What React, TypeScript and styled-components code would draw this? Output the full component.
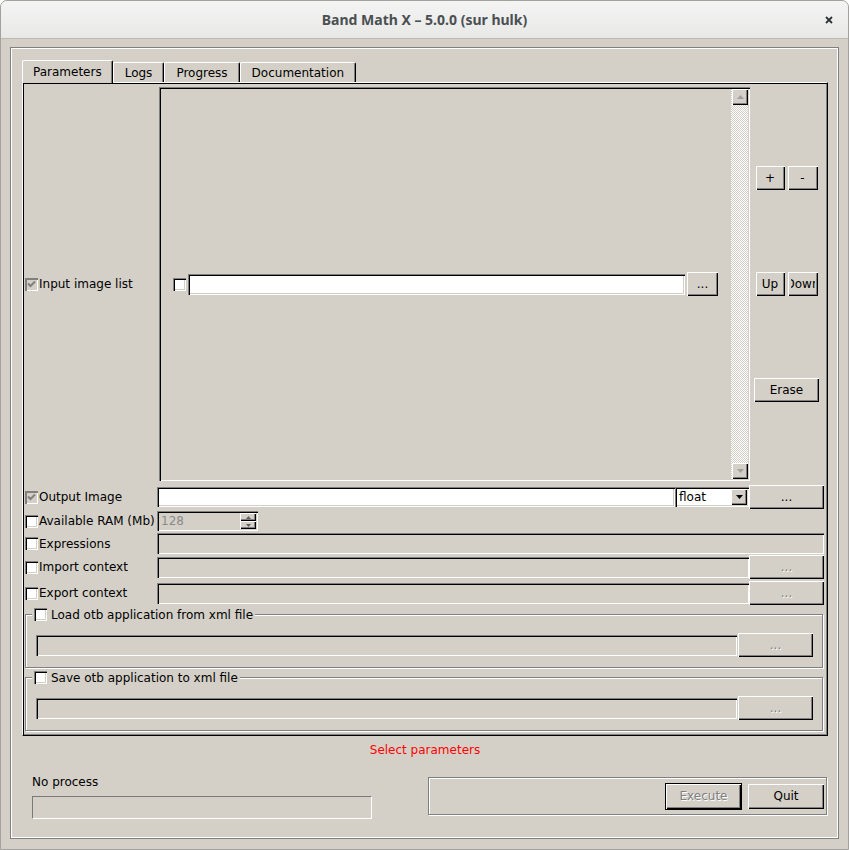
import React from "react";
import styled, { createGlobalStyle, css } from "styled-components";

const BG = "#d4d0c8";

const GlobalStyle = createGlobalStyle`
  html, body {
    margin: 0;
    padding: 0;
    background: #ffffff;
  }
  body {
    font-family: "DejaVu Sans", "Liberation Sans", sans-serif;
    font-size: 12px;
    color: #000;
  }
  * {
    box-sizing: border-box;
  }
`;

// windows style bevels
const raised = css`
  box-shadow: inset 1px 1px #ffffff, inset -1px -1px #000000, inset -2px -2px #808080;
`;

const sunken = css`
  box-shadow: inset 1px 1px #808080, inset 2px 2px #000000, inset -1px -1px #ffffff,
    inset -2px -2px ${BG};
`;

const etched = css`
  border: 1px solid #808080;
  box-shadow: inset 1px 1px #ffffff, 1px 1px #ffffff;
`;

const Window = styled.div`
  width: 849px;
  height: 850px;
  display: flex;
  flex-direction: column;
  background: ${BG};
  border: 1px solid #a3a19d;
  border-radius: 7px 7px 0 0;
  overflow: hidden;
`;

const TitleBar = styled.div`
  height: 38px;
  flex: none;
  display: grid;
  grid-template-columns: 1fr auto 1fr;
  align-items: center;
  background: linear-gradient(#f4f4f4, #e8e8e7);
  border-bottom: 1px solid #bfb8b1;
`;

const Title = styled.div`
  grid-column: 2;
  font-family: "Noto Sans", "Open Sans", sans-serif;
  font-weight: 700;
  font-size: 14px;
  color: #4a4f51;
`;

const CloseBox = styled.div`
  justify-self: end;
  display: flex;
  padding-right: 15px;
`;

const Body = styled.div`
  flex: 1;
  display: flex;
  padding: 8px 9px 10px 9px;
`;

const MainFrame = styled.div`
  flex: 1;
  display: flex;
  flex-direction: column;
  padding: 12px 10px 0 11px;
  ${etched}
  box-shadow: inset 1px 1px #ffffff, inset -1px -1px #ffffff;
`;

const TabBar = styled.div`
  height: 22px;
  display: flex;
  align-items: flex-end;
  position: relative;
  z-index: 1;
`;

const Tab = styled.div<{ $active?: boolean }>`
  height: ${(p) => (p.$active ? 23 : 20)}px;
  margin-bottom: ${(p) => (p.$active ? -1 : 0)}px;
  padding: 0 ${(p) => (p.$active ? 10 : 11)}px;
  display: flex;
  align-items: center;
  padding-bottom: ${(p) => (p.$active ? 1 : 0)}px;
  background: ${BG};
  border-left: 1px solid #ffffff;
  border-top: 1px solid #ffffff;
  border-right: 1px solid #000000;
  border-radius: 2px 2px 0 0;
  box-shadow: inset -1px 0 #808080;
  white-space: nowrap;
`;

const Pane = styled.div`
  height: 654px;
  display: flex;
  flex-direction: column;
  padding: 4px 3px 4px 2px;
  border: 1px solid;
  border-color: #ffffff #000000 #000000 #ffffff;
  box-shadow: inset 1px 1px #000000, inset -1px -1px #808080;
`;

const columns = css`
  display: grid;
  grid-template-columns: 132px 592px 75px;
`;

const ListRow = styled.div`
  ${columns}
  height: 394px;
  margin-bottom: 4px;
`;

const FieldGrid = styled.div`
  ${columns}
  grid-template-rows: 24px 24px 21px 26px 26px;
`;

const FieldLabel = styled.div`
  display: flex;
  align-items: center;
  gap: 1px;
  white-space: nowrap;
`;

const FieldCell = styled.div<{ $span?: boolean }>`
  display: flex;
  align-items: center;
  grid-column: ${(p) => (p.$span ? "span 2" : "auto")};
`;

const CheckBox = styled.span<{ $grey?: boolean }>`
  width: 13px;
  height: 13px;
  flex: none;
  display: flex;
  align-items: center;
  justify-content: center;
  background: ${(p) => (p.$grey ? BG : "#ffffff")};
  box-shadow: inset 1px 1px #808080, inset 2px 2px ${(p) => (p.$grey ? "#808080" : "#000000")},
    inset -1px -1px #ffffff, inset -2px -2px ${BG};
`;

const ListBox = styled.div`
  margin: 0 -1px 0 2px;
  padding: 2px;
  display: flex;
  background: ${BG};
  ${sunken}
`;

const ListViewport = styled.div`
  flex: 1;
  display: flex;
  align-items: center;
  gap: 2px;
  padding: 0 13px 0 12px;
`;

const ScrollBar = styled.div`
  width: 17px;
  display: flex;
  flex-direction: column;
  padding: 0 0 0 1px;
  background: repeating-conic-gradient(#ffffff 0 25%, ${BG} 0 50%) 0 0 / 2px 2px;
`;

const ScrollArrow = styled.div`
  height: 16px;
  display: flex;
  align-items: center;
  justify-content: center;
  background: ${BG};
  ${raised}
`;

const ScrollTrack = styled.div`
  flex: 1;
`;

const SideColumn = styled.div`
  display: flex;
  flex-direction: column;
  align-items: center;
  justify-content: space-between;
  padding: 79px 0;
`;

const ButtonPair = styled.div`
  display: flex;
  gap: 3px;
`;

const LineEdit = styled.div<{ $disabled?: boolean; $h?: number }>`
  flex: 1;
  height: ${(p) => p.$h ?? 21}px;
  background: ${(p) => (p.$disabled ? BG : "#ffffff")};
  ${sunken}
`;

const PushButton = styled.button<{ $w?: number; $h?: number; $default?: boolean }>`
  width: ${(p) => (p.$w ? `${p.$w}px` : "100%")};
  height: ${(p) => p.$h ?? 24}px;
  flex: none;
  padding: 0 3px;
  border: ${(p) => (p.$default ? "1px solid #000000" : "none")};
  background: ${BG};
  font: inherit;
  color: #000000;
  display: flex;
  align-items: center;
  justify-content: center;
  ${raised}
  &:disabled {
    color: #808080;
    text-shadow: 1px 1px #ffffff;
  }
`;

const BtnLabel = styled.span`
  width: 100%;
  display: flex;
  justify-content: center;
  overflow: hidden;
  white-space: nowrap;
`;

const Combo = styled.div`
  width: 74px;
  height: 20px;
  flex: none;
  display: flex;
  align-items: center;
  padding: 2px;
  background: #ffffff;
  ${sunken}
`;

const ComboText = styled.span`
  flex: 1;
  padding-left: 2px;
`;

const ArrowButton = styled.div<{ $h?: number }>`
  width: 16px;
  height: ${(p) => p.$h ?? 16}px;
  display: flex;
  align-items: center;
  justify-content: center;
  background: ${BG};
  ${raised}
`;

const SpinBox = styled.div`
  width: 101px;
  height: 20px;
  display: flex;
  align-items: center;
  padding: 2px 2px 2px 4px;
  color: #8a8a8a;
  background: ${BG};
  ${sunken}
`;

const SpinValue = styled.span`
  flex: 1;
`;

const SpinArrows = styled.div`
  display: flex;
  flex-direction: column;
`;

const GroupBox = styled.div<{ $top: number }>`
  position: relative;
  height: 54px;
  margin: ${(p) => p.$top}px 1px 0 0;
  padding: 18px 9px 0 10px;
  ${etched}
`;

const GroupTitle = styled.div`
  position: absolute;
  top: -7px;
  left: 6px;
  padding: 0 2px;
  display: flex;
  align-items: center;
  gap: 4px;
  height: 13px;
  background: ${BG};
  white-space: nowrap;
`;

const GroupRow = styled.div`
  height: 24px;
  display: flex;
  align-items: center;
  gap: 1px;
`;

const StatusText = styled.div`
  margin-top: 7px;
  line-height: 14px;
  text-align: center;
  color: #ff0000;
`;

const BottomRow = styled.div`
  margin-top: 18px;
  display: flex;
  align-items: flex-start;
`;

const ProgressColumn = styled.div`
  width: 350px;
  padding-left: 10px;
  display: flex;
  flex-direction: column;
  gap: 7px;
  line-height: 14px;
`;

const ProgressBar = styled.div`
  height: 23px;
  border: 1px solid;
  border-color: #7a7a7a #ffffff #ffffff #7a7a7a;
`;

const ActionFrame = styled.div`
  flex: 1;
  height: 38px;
  margin: 2px 1px 0 56px;
  padding-right: 2px;
  display: flex;
  align-items: center;
  justify-content: flex-end;
  gap: 6px;
  ${etched}
`;

const Check = () => (
  <svg width="9" height="9" viewBox="0 0 9 9">
    <path d="M1 3.5 L3.5 6 L8 1.5" stroke="#808080" strokeWidth="2" fill="none" />
  </svg>
);

const Tri = ({ up, color, w = 7 }: { up?: boolean; color: string; w?: number }) => {
  const h = Math.ceil(w / 2);
  return (
    <svg width={w} height={h} viewBox={`0 0 ${w} ${h}`}>
      <polygon
        points={up ? `0,${h} ${w},${h} ${w / 2},0` : `0,0 ${w},0 ${w / 2},${h}`}
        fill={color}
      />
    </svg>
  );
};

const Btn = ({ children, ...rest }: React.ComponentProps<typeof PushButton>) => (
  <PushButton {...rest}>
    <BtnLabel>{children}</BtnLabel>
  </PushButton>
);

const Field = ({ label, grey, checked }: { label: string; grey?: boolean; checked?: boolean }) => (
  <FieldLabel>
    <CheckBox $grey={grey}>{checked && <Check />}</CheckBox>
    {label}
  </FieldLabel>
);

export default function App() {
  return (
    <>
      <GlobalStyle />
      <Window>
        <TitleBar>
          <Title>Band Math X – 5.0.0 (sur hulk)</Title>
          <CloseBox>
            <svg width="8" height="8" viewBox="0 0 8 8">
              <path d="M1 1 L7 7 M7 1 L1 7" stroke="#2e3436" strokeWidth="1.8" />
            </svg>
          </CloseBox>
        </TitleBar>
        <Body>
          <MainFrame>
            <TabBar>
              <Tab $active>Parameters</Tab>
              <Tab>Logs</Tab>
              <Tab>Progress</Tab>
              <Tab>Documentation</Tab>
            </TabBar>
            <Pane>
              <ListRow>
                <Field label="Input image list" grey checked />
                <ListBox>
                  <ListViewport>
                    <CheckBox />
                    <LineEdit />
                    <Btn $w={31}>...</Btn>
                  </ListViewport>
                  <ScrollBar>
                    <ScrollArrow>
                      <Tri up color="#a0a0a0" />
                    </ScrollArrow>
                    <ScrollTrack />
                    <ScrollArrow>
                      <Tri color="#a0a0a0" />
                    </ScrollArrow>
                  </ScrollBar>
                </ListBox>
                <SideColumn>
                  <ButtonPair>
                    <Btn $w={29}>+</Btn>
                    <Btn $w={30}>-</Btn>
                  </ButtonPair>
                  <ButtonPair>
                    <Btn $w={29}>Up</Btn>
                    <Btn $w={30}>Down</Btn>
                  </ButtonPair>
                  <Btn $w={65}>Erase</Btn>
                </SideColumn>
              </ListRow>

              <FieldGrid>
                <Field label="Output Image" grey checked />
                <FieldCell>
                  <LineEdit $h={20} />
                  <Combo>
                    <ComboText>float</ComboText>
                    <ArrowButton>
                      <Tri color="#000000" />
                    </ArrowButton>
                  </Combo>
                </FieldCell>
                <FieldCell>
                  <Btn>...</Btn>
                </FieldCell>

                <Field label="Available RAM (Mb)" />
                <FieldCell $span>
                  <SpinBox>
                    <SpinValue>128</SpinValue>
                    <SpinArrows>
                      <ArrowButton $h={8}>
                        <Tri up color="#606060" w={5} />
                      </ArrowButton>
                      <ArrowButton $h={8}>
                        <Tri color="#606060" w={5} />
                      </ArrowButton>
                    </SpinArrows>
                  </SpinBox>
                </FieldCell>

                <Field label="Expressions" />
                <FieldCell $span>
                  <LineEdit $disabled />
                </FieldCell>

                <Field label="Import context" />
                <FieldCell>
                  <LineEdit $disabled />
                </FieldCell>
                <FieldCell>
                  <Btn disabled>...</Btn>
                </FieldCell>

                <Field label="Export context" />
                <FieldCell>
                  <LineEdit $disabled />
                </FieldCell>
                <FieldCell>
                  <Btn disabled>...</Btn>
                </FieldCell>
              </FieldGrid>

              <GroupBox $top={8}>
                <GroupTitle>
                  <CheckBox />
                  Load otb application from xml file
                </GroupTitle>
                <GroupRow>
                  <LineEdit $disabled />
                  <Btn $w={75} disabled>
                    ...
                  </Btn>
                </GroupRow>
              </GroupBox>

              <GroupBox $top={9}>
                <GroupTitle>
                  <CheckBox />
                  Save otb application to xml file
                </GroupTitle>
                <GroupRow>
                  <LineEdit $disabled />
                  <Btn $w={75} disabled>
                    ...
                  </Btn>
                </GroupRow>
              </GroupBox>
            </Pane>

            <StatusText>Select parameters</StatusText>

            <BottomRow>
              <ProgressColumn>
                <span>No process</span>
                <ProgressBar />
              </ProgressColumn>
              <ActionFrame>
                <Btn $w={77} $h={27} $default disabled>
                  Execute
                </Btn>
                <Btn $w={76} $h={25}>
                  Quit
                </Btn>
              </ActionFrame>
            </BottomRow>
          </MainFrame>
        </Body>
      </Window>
    </>
  );
}
